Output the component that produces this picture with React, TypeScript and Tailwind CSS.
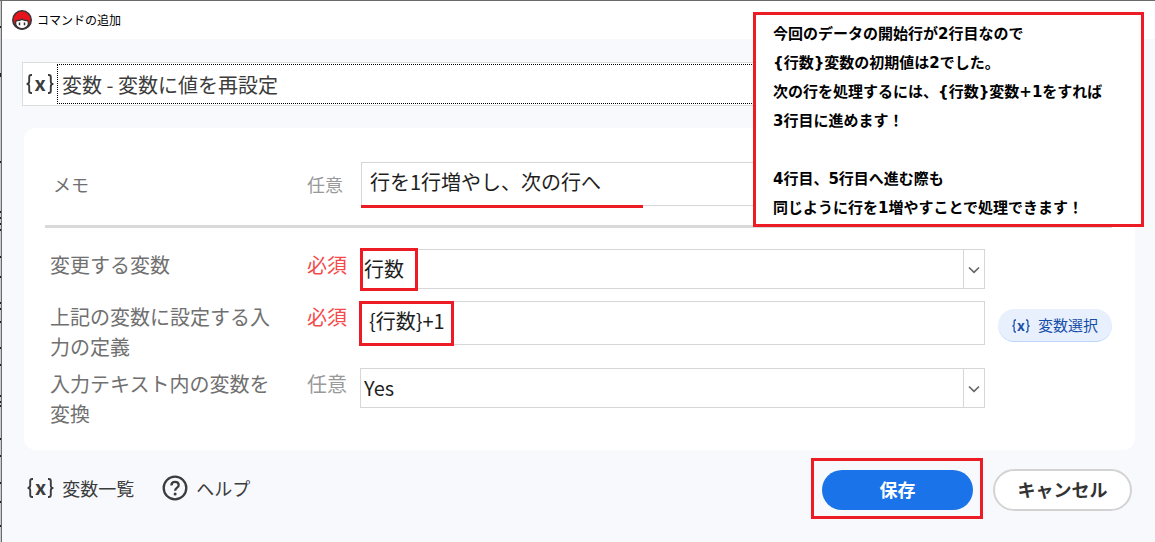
import React from "react";

const jp = "font-['Noto_Sans_CJK_JP',sans-serif]";

function Brace({ className }: { className: string }) {
  return (
    <svg viewBox="0 0 6 20" className={className} fill="none" stroke="currentColor" strokeWidth="1.9" aria-hidden="true">
      <path d="M6 1H5.2Q3.2 1 3.2 3V7.6Q3.2 10 0.6 10Q3.2 10 3.2 12.4V17Q3.2 19 5.2 19H6" />
    </svg>
  );
}

function VariableMark({ small }: { small?: boolean }) {
  return (
    <span aria-hidden="true" className={`flex items-center font-bold leading-none ${small ? "gap-px text-sm" : "gap-0.5 text-xl"}`}>
      <Brace className={small ? "h-3.5 w-1" : "h-5 w-1.5"} />
      <span className={small ? "pb-0.5" : "pb-[3px]"}>x</span>
      <Brace className={small ? "h-3.5 w-1 rotate-180" : "h-5 w-1.5 rotate-180"} />
    </span>
  );
}

function Logo() {
  return (
    <svg viewBox="0 0 20 20" className="size-5 shrink-0" aria-hidden="true">
      <circle cx="10" cy="10" r="9.2" fill="#e8141c" stroke="#3a3234" strokeWidth="1.6" />
      <path
        d="M3.6 14.6V12Q3.8 10.6 5.4 10.6Q7.6 10.6 9.2 9.6Q10 9 10.8 9.6Q12.4 10.6 14.6 10.6Q16.2 10.6 16.4 12V14.6Q14.4 18.8 10 18.8T3.6 14.6Z"
        fill="#fff"
        stroke="#3a3234"
        strokeWidth="1.5"
      />
      <path d="M7.5 12.4V15.2M12.5 12.4V15.2" stroke="#2d2a2b" strokeWidth="1.5" />
    </svg>
  );
}

function HelpIcon() {
  return (
    <svg viewBox="0 0 26 26" className="size-[26px] shrink-0" fill="none" stroke="#3c3c3c" aria-hidden="true">
      <circle cx="13" cy="13" r="11.3" strokeWidth="2.3" />
      <path d="M9.4 10.4C9.4 8.2 10.9 6.9 13 6.9S16.7 8.2 16.7 10.2C16.7 12.6 13.1 12.8 13.1 15.8" strokeWidth="2.3" />
      <circle cx="13.1" cy="18.9" r="1.5" fill="#3c3c3c" stroke="none" />
    </svg>
  );
}

function Backdrop() {
  const ticks = [25, 72, 74, 160, 210, 216, 222, 228, 255, 275, 301, 307, 320, 346, 363, 394, 400, 404, 437, 454, 481, 500, 524];
  return (
    <svg className="absolute left-0 top-0 h-full w-px" preserveAspectRatio="none" aria-hidden="true">
      <rect width="1" height="100%" fill="#c9cbd1" />
      {ticks.map((y) => (
        <rect key={y} y={y} width="1" height="2" fill="#222" />
      ))}
    </svg>
  );
}

function Mark({ className }: { className: string }) {
  return <span aria-hidden="true" className={`pointer-events-none absolute border-[3px] border-[#ed1c24] ${className}`} />;
}

function Picker({ id, value }: { id: string; value: string }) {
  return (
    <div className="relative flex h-10 border border-[#d6d6d6] bg-white">
      <select id={id} className="min-w-0 flex-1 appearance-none bg-white pl-[3px] text-xl text-[#1f1f1f] outline-none">
        <option>{value}</option>
      </select>
      <span className="flex w-[21px] items-center justify-center border-l border-[#d6d6d6] pt-0.5">
        <svg viewBox="0 0 12 8" className="h-2 w-3" fill="none" stroke="#666" strokeWidth="1.7" aria-hidden="true">
          <path d="M1 1.5L6 6.3L11 1.5" />
        </svg>
      </span>
    </div>
  );
}

function Row({
  id,
  label,
  required,
  className,
  action,
  children,
}: {
  id: string;
  label: string;
  required?: boolean;
  className: string;
  action?: React.ReactNode;
  children: React.ReactNode;
}) {
  return (
    <div className={`flex items-start pl-[5px] ${className}`}>
      <label htmlFor={id} className="mr-[27px] w-[230px] shrink-0 pt-px text-xl leading-[30px] text-[#707070]">
        {label}
      </label>
      <span className={`w-[53px] shrink-0 pt-px text-xl leading-[30px] ${required ? "text-[#f44a4a]" : "text-[#999]"}`}>
        {required ? "必須" : "任意"}
      </span>
      <div className="relative min-w-0 flex-1">{children}</div>
      <div className="w-[127px] shrink-0 pl-[13px]">{action}</div>
    </div>
  );
}

export default function App() {
  return (
    <div className={`relative flex min-h-screen flex-col overflow-hidden border-t border-[#6a6a6a] bg-[#f7f9fd] pl-px ${jp}`}>
      <Backdrop />
      <div className="flex-1 border-l border-[#6a6a6a]">
        <header className="flex h-[38px] items-center gap-[5px] bg-white pl-2.5">
          <Logo />
          <h1 className="text-xs text-black">コマンドの追加</h1>
        </header>

        <main className="pl-5 pr-5 pt-[23px]">
          <div className="flex h-11 border border-[#dcdcdc] bg-white">
            <label htmlFor="command" aria-label="コマンド" className="flex w-[34px] items-center justify-center text-[#3c3c3c]">
              <VariableMark />
            </label>
            <select
              id="command"
              className="my-px min-w-0 flex-1 appearance-none border border-dotted border-black bg-white pl-1 pt-px text-xl text-[#3c3c3c] outline-none"
            >
              <option>変数 - 変数に値を再設定</option>
            </select>
          </div>

          <section className="ml-0.5 mt-[22px] rounded-xl bg-white pb-[21px] pl-[21px] pr-[23px] pt-[34px]">
            <div className="flex items-center pl-2">
              <label htmlFor="memo" className="w-[254px] shrink-0 text-lg text-[#707070]">
                メモ
              </label>
              <span className="w-[54px] shrink-0 text-lg text-[#999]">任意</span>
              <div className="relative mr-[127px] min-w-0 flex-1">
                <input
                  id="memo"
                  defaultValue="行を1行増やし、次の行へ"
                  className="block h-11 w-full border border-[#d6d6d6] bg-white pb-1.5 pl-2 text-xl text-[#1f1f1f] outline-none"
                />
                <span aria-hidden="true" className="absolute left-0 top-[43px] h-[3px] w-[282px] bg-[#ed1c24]" />
              </div>
            </div>

            <hr className="mt-[19px] border-t-[3px] border-[#d9d9d9]" />

            <Row id="target" label="変更する変数" required className="mt-[21px]">
              <Picker id="target" value="行数" />
              <Mark className="left-0 -top-px h-[43px] w-[58px]" />
            </Row>

            <Row
              id="definition"
              label="上記の変数に設定する入力の定義"
              required
              className="mt-3"
              action={
                <button
                  type="button"
                  className="mt-2 flex h-[33px] w-full items-center justify-center gap-2 rounded-full border-b border-[#bdd6fb] bg-[#e8f0fe] pt-px text-[15px] text-[#174ea6]"
                >
                  <VariableMark small />
                  変数選択
                </button>
              }
            >
              <input
                id="definition"
                defaultValue="{行数}+1"
                className="block h-11 w-full border border-[#d6d6d6] bg-white pb-1.5 pl-2 text-xl text-[#1f1f1f] outline-none"
              />
              <Mark className="-left-px top-0 h-[45px] w-[95px]" />
            </Row>

            <Row id="expand" label="入力テキスト内の変数を変換" className="mt-1.5">
              <Picker id="expand" value="Yes" />
            </Row>
          </section>

          <footer className="mt-[19px] flex items-start pl-[5px] text-lg text-[#3c3c3c]">
            <button type="button" className="mt-[5px] flex items-center gap-2">
              <VariableMark />
              変数一覧
            </button>
            <button type="button" className="ml-7 mt-[5px] flex items-center gap-2">
              <HelpIcon />
              ヘルプ
            </button>
            <div className="ml-auto mr-[3px] flex items-center gap-5">
              <div className="relative">
                <button type="button" className="block h-10 w-[151px] rounded-full bg-[#1a73e8] pb-0.5 font-bold text-white">
                  保存
                </button>
                <Mark className="-left-[11px] -top-3 h-[61px] w-[172px]" />
              </div>
              <button
                type="button"
                className="h-[42px] w-[139px] rounded-full border-2 border-[#d3d3d3] bg-white pb-0.5 font-bold text-[#333]"
              >
                キャンセル
              </button>
            </div>
          </footer>
        </main>
      </div>

      <aside className="absolute right-[11px] top-[11px] h-[215px] w-[391px] border-[3px] border-[#ed1c24] bg-white pl-[17px] pt-[5px] font-['DejaVu_Sans','Noto_Sans_CJK_JP',sans-serif] text-[15px] font-bold leading-[29px] text-black">
        <p>
          今回のデータの開始行が2行目なので
          <br />
          {"{行数}変数の初期値は2でした。"}
          <br />
          {"次の行を処理するには、{行数}変数+1をすれば"}
          <br />
          3行目に進めます！
        </p>
        <p className="mt-[29px]">
          4行目、5行目へ進む際も
          <br />
          同じように行を1増やすことで処理できます！
        </p>
      </aside>
    </div>
  );
}
